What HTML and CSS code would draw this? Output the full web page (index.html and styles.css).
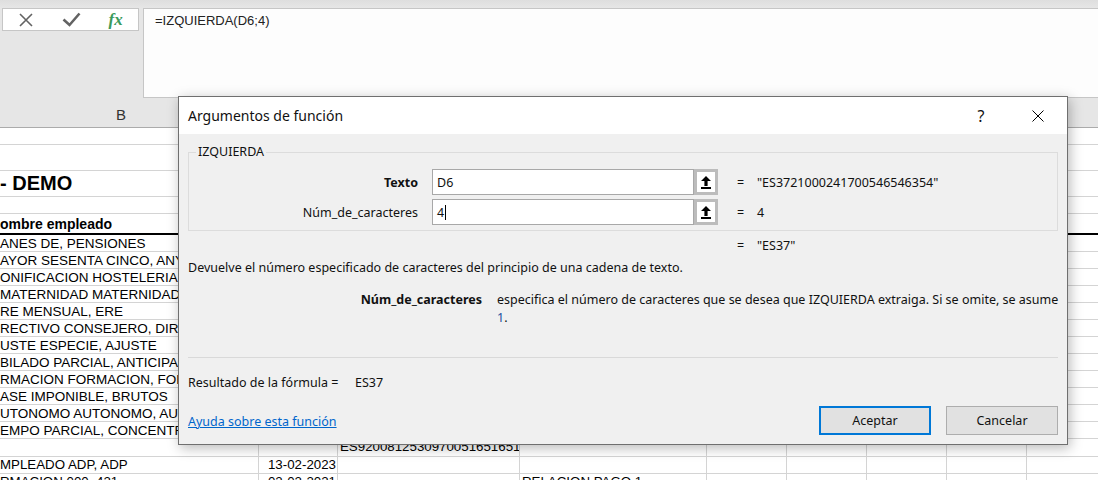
FILE: index.html
```html
<!DOCTYPE html>
<html lang="es">

<head>
    <meta charset="UTF-8">
    <title>Argumentos de función</title>
    <link rel="stylesheet" href="styles.css">
</head>

<body>
    <div class="formula-bar">
        <div class="fx-box">
            <span class="fx-slot">
                <svg width="14" height="14" viewBox="0 0 14 14"><path d="M1 1L13 13M13 1L1 13" stroke="#636363" stroke-width="1.6" fill="none"/></svg>
            </span>
            <span class="fx-slot">
                <svg width="19" height="15" viewBox="0 0 19 15"><path d="M1.5 7.5L7.5 13L17.5 1.5" stroke="#636363" stroke-width="2.6" fill="none"/></svg>
            </span>
            <span class="fx-slot fx">fx</span>
        </div>
        <div class="formula-input">=IZQUIERDA(D6;4)</div>
    </div>

    <div class="sheet">
        <div class="col-head"><span class="col-b">B</span></div>
        <div class="row r17"></div>
        <div class="row r26"></div>
        <div class="row r26 title">- DEMO</div>
        <div class="row r17"></div>
        <div class="row head">ombre empleado</div>
        <div class="row r17">ANES DE, PENSIONES</div>
        <div class="row r17">AYOR SESENTA CINCO, ANYS</div>
        <div class="row r17">ONIFICACION HOSTELERIA, M</div>
        <div class="row r17">MATERNIDAD MATERNIDAD, P</div>
        <div class="row r17">RE MENSUAL, ERE</div>
        <div class="row r17">RECTIVO CONSEJERO, DIREC</div>
        <div class="row r17">USTE ESPECIE, AJUSTE</div>
        <div class="row r17">BILADO PARCIAL, ANTICIPAD</div>
        <div class="row r17">RMACION FORMACION, FOR</div>
        <div class="row r17">ASE IMPONIBLE, BRUTOS</div>
        <div class="row r17">UTONOMO AUTONOMO, AUTO</div>
        <div class="row r17">EMPO PARCIAL, CONCENTRA</div>
        <div class="row grid r18">
            <span></span><span></span><span>ES9200812530970051651651</span><span></span><span></span><span></span><span></span><span></span><span></span>
        </div>
        <div class="row grid r17">
            <span>MPLEADO ADP, ADP</span><span class="num">13-02-2023</span><span></span><span></span><span></span><span></span><span></span><span></span><span></span>
        </div>
        <div class="row grid r17">
            <span>RMACION 000, 421</span><span class="num">02-02-2021</span><span></span><span>RELACION PAGO 1</span><span></span><span></span><span></span><span></span><span></span>
        </div>
    </div>

    <div class="dialog">
        <div class="dlg-title">
            <span class="dlg-name">Argumentos de función</span>
            <span class="dlg-help">?</span>
            <svg class="dlg-close" width="12" height="12" viewBox="0 0 12 12"><path d="M0.5 0.5L11.5 11.5M11.5 0.5L0.5 11.5" stroke="#000" stroke-width="1" fill="none"/></svg>
        </div>

        <div class="dlg-body">
            <div class="group">
                <span class="group-title">IZQUIERDA</span>
                <div class="arg">
                    <span class="arg-label"><b>Texto</b></span>
                    <span class="arg-input">D6</span>
                    <span class="pick">
                        <svg width="10" height="13" viewBox="0 0 10 13"><path d="M5 0L10 5H6.6V10H3.4V5H0Z M0 11H10V13H0Z" fill="#000"/></svg>
                    </span>
                    <span class="eq">=</span>
                    <span>"ES3721000241700546546354"</span>
                </div>
                <div class="arg">
                    <span class="arg-label">Núm_de_caracteres</span>
                    <span class="arg-input">4<i class="caret"></i></span>
                    <span class="pick">
                        <svg width="10" height="13" viewBox="0 0 10 13"><path d="M5 0L10 5H6.6V10H3.4V5H0Z M0 11H10V13H0Z" fill="#000"/></svg>
                    </span>
                    <span class="eq">=</span>
                    <span>4</span>
                </div>
            </div>

            <div class="formula-value"><span class="eq">=</span>"ES37"</div>

            <div class="desc">Devuelve el número especificado de caracteres del principio de una cadena de texto.</div>

            <div class="arg-help">
                <b>Núm_de_caracteres</b>
                <p>especifica el número de caracteres que se desea que IZQUIERDA extraiga. Si se omite, se asume<br><span class="one">1</span>.</p>
            </div>

            <div class="sep"></div>

            <div class="result"><span class="result-label">Resultado de la fórmula =</span>ES37</div>

            <div class="footer">
                <a class="help-link" href="#">Ayuda sobre esta función</a>
                <button class="btn default">Aceptar</button>
                <button class="btn">Cancelar</button>
            </div>
        </div>
    </div>
</body>

</html>
```

FILE: styles.css
```css
body {
    margin: 0;
    width: 1098px;
    height: 480px;
    overflow: hidden;
    position: relative;
    background: #fff;
    font-family: "Liberation Sans", Arial, sans-serif;
    color: #000;
}

/* barra de fórmulas */
.formula-bar {
    display: flex;
    align-items: flex-start;
    height: 98px;
    background: linear-gradient(#dedede, #e6e6e6 8px);
}

.fx-box {
    display: flex;
    margin: 8px 0 0 2px;
    width: 137px;
    height: 23px;
    box-sizing: border-box;
    padding-left: 1px;
    background: #fff;
    border: 1px solid #c6c6c6;
}

.fx-slot {
    width: 45px;
    display: flex;
    align-items: center;
    justify-content: center;
}

.fx {
    font-family: "Liberation Serif", serif;
    font-style: italic;
    font-weight: bold;
    font-size: 17px;
    color: #3a9a5c;
}

.formula-input {
    flex: 1;
    margin: 8px 0 0 4px;
    height: 90px;
    box-sizing: border-box;
    padding: 4px 11px;
    background: #fdfdfd;
    border: 1px solid #c6c6c6;
    border-right: none;
    font-size: 13px;
    color: #222;
}

/* hoja */
.col-head {
    height: 30px;
    box-sizing: border-box;
    background: #e6e6e6;
    border-bottom: 1px solid #ababab;
    display: flex;
    align-items: center;
}

.col-b {
    width: 242px;
    text-align: center;
    font-size: 15px;
    color: #333;
    padding-top: 4px;
}

.row {
    box-sizing: border-box;
    border-bottom: 1px solid #d4d4d4;
    display: flex;
    align-items: center;
    font-size: 13.5px;
    white-space: nowrap;
    overflow: hidden;
}

.r17 {
    height: 17px;
}

.r18 {
    height: 18px;
}

.r26 {
    height: 26px;
}

.title {
    font-size: 20px;
    font-weight: bold;
}

.head {
    height: 21px;
    font-size: 14px;
    font-weight: bold;
    border-bottom: 2px solid #000;
}

.grid {
    display: grid;
    grid-template-columns: 259px 79px 182px 187px 80px 80px 80px 80px 80px;
    align-items: stretch;
    font-size: 13.3px;
}

.grid span {
    border-right: 1px solid #d4d4d4;
    line-height: 16px;
    padding-left: 2px;
    overflow: hidden;
}

.grid span:first-child {
    padding-left: 0;
}

.grid .num {
    text-align: right;
    padding: 0 1px 0 0;
}

/* cuadro de diálogo */
.dialog {
    position: absolute;
    left: 178px;
    top: 96px;
    width: 890px;
    height: 349px;
    box-sizing: border-box;
    border: 1px solid #6f6f6f;
    background: #f0f0f0;
    box-shadow: 2px 3px 12px rgba(0, 0, 0, 0.28);
    font-family: "Noto Sans", sans-serif;
    font-size: 12.5px;
    color: #111;
}

.dlg-title {
    height: 37px;
    display: flex;
    align-items: center;
    padding: 0 23px 0 9px;
    background: #fff;
    font-size: 14px;
}

.dlg-name {
    flex: 1;
}

.dlg-help {
    width: 20px;
    text-align: center;
    margin-right: 41px;
    font-size: 16px;
}

.dlg-body {
    padding: 18px 9px 0;
}

.group {
    position: relative;
    height: 79px;
    box-sizing: border-box;
    padding-top: 16px;
    border: 1px solid #dcdcdc;
}

.group-title {
    position: absolute;
    top: -9px;
    left: 7px;
    padding: 0 2px;
    background: #f0f0f0;
    line-height: 16px;
}

.arg {
    display: flex;
    align-items: center;
    height: 26px;
}

.arg + .arg {
    margin-top: 4px;
}

.arg-label {
    width: 229px;
    margin-right: 14px;
    text-align: right;
}

.arg-input {
    width: 262px;
    height: 26px;
    box-sizing: border-box;
    display: flex;
    align-items: center;
    padding-left: 4px;
    background: #fff;
    border: 1px solid #a8a8a8;
}

.caret {
    display: inline-block;
    width: 1px;
    height: 15px;
    margin-left: 1px;
    background: #000;
}

.pick {
    width: 24px;
    height: 26px;
    box-sizing: border-box;
    display: flex;
    align-items: center;
    justify-content: center;
    background: #fff;
    border: 3px solid #bcbcbc;
}

.eq {
    display: inline-block;
    width: 20px;
    margin-left: 19px;
}

.formula-value {
    margin-top: 7px;
    padding-left: 530px;
    line-height: 16px;
}

.desc {
    margin-top: 6px;
    line-height: 16px;
}

.arg-help {
    display: flex;
    margin-top: 15px;
    line-height: 18px;
}

.arg-help b {
    flex: none;
    width: 294px;
    margin-right: 15px;
    text-align: right;
}

.arg-help p {
    margin: 0;
    white-space: nowrap;
}

.one {
    color: #1f4f9e;
}

.sep {
    margin-top: 30px;
    border-top: 1px solid #d9d9d9;
}

.result {
    margin-top: 17px;
    line-height: 16px;
}

.result-label {
    display: inline-block;
    width: 167px;
}

.footer {
    display: flex;
    align-items: center;
    height: 29px;
    margin-top: 15px;
}

.help-link {
    flex: 1;
    color: #0066cc;
    padding-top: 2px;
}

.btn {
    width: 112px;
    height: 29px;
    box-sizing: border-box;
    background: #e1e1e1;
    border: 1px solid #adadad;
    font: inherit;
    color: #111;
}

.btn.default {
    border: 2px solid #0078d7;
}

.btn + .btn {
    margin-left: 15px;
}
```
